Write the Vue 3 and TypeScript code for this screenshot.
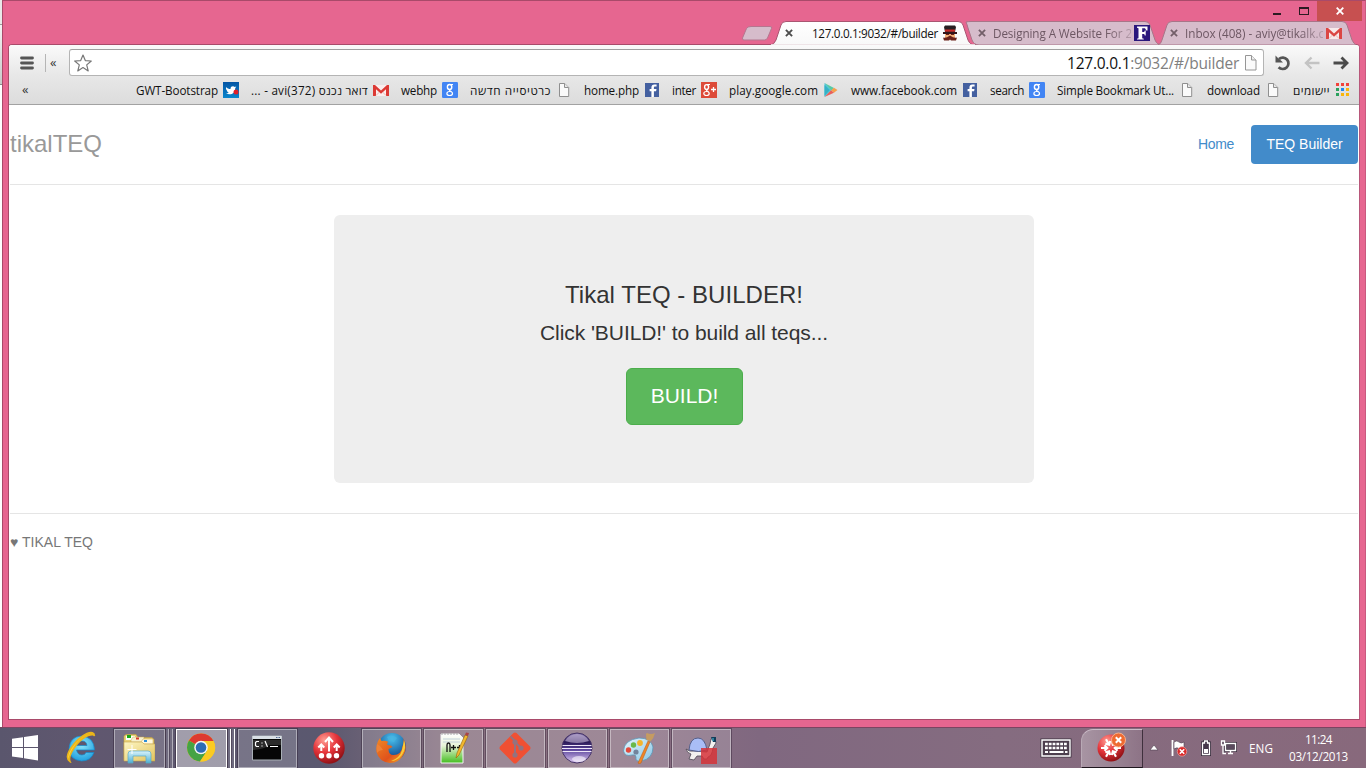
<script setup lang="ts">
interface Bookmark {
  label: string
  icon: string
  width: number
  rtl?: boolean
}

interface TaskItem {
  icon: string
  state: 'open' | 'stack' | 'active' | 'pinned'
}

const bookmarks: Bookmark[] = [
  { label: 'GWT-Bootstrap', icon: 'twitter', width: 82 },
  { label: 'דואר נכנס (372)avi - ...', icon: 'gmail', width: 117, rtl: true },
  { label: 'webhp', icon: 'google', width: 36 },
  { label: 'כרטיסייה חדשה', icon: 'page', width: 81, rtl: true },
  { label: 'home.php', icon: 'facebook', width: 55 },
  { label: 'inter', icon: 'gplus', width: 24 },
  { label: 'play.google.com', icon: 'play', width: 89 },
  { label: 'www.facebook.com', icon: 'facebook', width: 106 },
  { label: 'search', icon: 'google', width: 34 },
  { label: 'Simple Bookmark Ut...', icon: 'page', width: 117 },
  { label: 'download', icon: 'page', width: 53 },
  { label: 'יישומים', icon: 'apps', width: 37, rtl: true },
]

const tasks: TaskItem[] = [
  { icon: 'explorer', state: 'stack' },
  { icon: 'chrome', state: 'active' },
  { icon: 'cmd', state: 'open' },
  { icon: 'arrows', state: 'pinned' },
  { icon: 'firefox', state: 'open' },
  { icon: 'notepad', state: 'open' },
  { icon: 'git', state: 'open' },
  { icon: 'eclipse', state: 'open' },
  { icon: 'paint', state: 'open' },
  { icon: 'turtle', state: 'open' },
]

const inwardAngles = [30, 90, 150, 210, 270, 330]

// Spreads or tightens letters so that a label fills the given width.
const vFit = {
  mounted(el: HTMLElement, binding: { value: number }) {
    const apply = () => {
      el.style.letterSpacing = '0px'
      const natural = el.getBoundingClientRect().width
      const count = (el.textContent ?? '').trim().length
      el.style.letterSpacing = `${(binding.value - natural) / count}px`
    }
    apply()
    document.fonts.ready.then(apply)
  },
}
</script>

<template>
  <svg class="defs" width="0" height="0" aria-hidden="true">
    <defs>
      <linearGradient id="gTab" x1="0" y1="0" x2="0" y2="1"><stop offset="0" stop-color="#fff" /><stop offset="1" stop-color="#f8f8f8" /></linearGradient>
      <linearGradient id="gBird" x1="0" y1="0" x2="0" y2="1"><stop offset="0" stop-color="#0455a4" /><stop offset="1" stop-color="#0a86cc" /></linearGradient>
      <linearGradient id="gFolder" x1="0" y1="0" x2="1" y2="1"><stop offset="0" stop-color="#fdf6c4" /><stop offset="1" stop-color="#e2c35c" /></linearGradient>
      <linearGradient id="gStand" x1="0" y1="0" x2="0" y2="1"><stop offset="0" stop-color="#d9f3fb" /><stop offset="1" stop-color="#4fb0d3" /></linearGradient>
      <radialGradient id="gRed" cx=".35" cy=".25" r=".8"><stop offset="0" stop-color="#ff9d94" /><stop offset=".5" stop-color="#e5343a" /><stop offset="1" stop-color="#8a0d12" /></radialGradient>
      <radialGradient id="gIe" cx=".5" cy=".35" r=".7"><stop offset="0" stop-color="#8be6fb" /><stop offset="1" stop-color="#1a9bdc" /></radialGradient>
      <linearGradient id="gRing" x1="0" y1="1" x2="1" y2="0"><stop offset="0" stop-color="#ffe04d" /><stop offset="1" stop-color="#f3b20f" /></linearGradient>
      <radialGradient id="gGlobe" cx=".5" cy=".2" r=".8"><stop offset="0" stop-color="#49c1ee" /><stop offset="1" stop-color="#08357f" /></radialGradient>
      <linearGradient id="gFox" x1="0" y1="0" x2="1" y2="1"><stop offset="0" stop-color="#f08a24" /><stop offset=".6" stop-color="#e0521c" /><stop offset="1" stop-color="#f6b327" /></linearGradient>
      <linearGradient id="gNote" x1="0" y1="0" x2="0" y2="1"><stop offset="0" stop-color="#fff" /><stop offset=".4" stop-color="#e8f4d8" /><stop offset="1" stop-color="#43bd1f" /></linearGradient>
      <linearGradient id="gEcl" x1="0" y1="0" x2="0" y2="1"><stop offset="0" stop-color="#8a78b0" /><stop offset=".3" stop-color="#2b1a56" /><stop offset=".55" stop-color="#59439a" /><stop offset="1" stop-color="#e2cdf5" /></linearGradient>
      <linearGradient id="gPal" x1="0" y1="0" x2="1" y2="1"><stop offset="0" stop-color="#e3f5fc" /><stop offset="1" stop-color="#8cc7e6" /></linearGradient>
    </defs>

    <symbol id="twitter" viewBox="0 0 16 16">
      <rect width="16" height="16" fill="url(#gBird)" />
      <path d="M3 5c1.200 1.500 2.700 2 4.500 2 0-2 1.200-2.700 2.400-2.700.8 0 1.400.3 1.800.7l1.600-.4-1.100 1.600c0 4-2.500 6-5.600 6-1.500 0-2.700-.4-3.600-1 1.100 0 2-.2 2.700-.8C4.300 10 4 9.300 4 8.800L3 7z" fill="#fff" />
      <circle cx="13" cy="10" r="2.500" fill="#df2027" />
    </symbol>
    <symbol id="gmail" viewBox="0 0 16 16">
      <rect x="0" y="3" width="16" height="11" fill="#fbeeee" />
      <path d="M0 14V3h2L8 8.500 14 3h2v11h-3V7.200L8 11.800 3 7.200V14z" fill="#dc3a35" />
      <path d="M3 13.500l3.500-3.500M13 13.500l-3.500-3.500" stroke="#e9a8a5" stroke-width=".8" />
    </symbol>
    <symbol id="google" viewBox="0 0 16 16">
      <rect width="16" height="16" rx="1.300" fill="#4285f4" />
      <g fill="none" stroke="#fff">
        <ellipse cx="7.600" cy="5" rx="2.200" ry="2.500" stroke-width="1.400" />
        <path d="M7.800 2.500H11M8 7.600c-1.300 1 .4 1.400 1.500 2.100" stroke-width="1.200" />
        <ellipse cx="7.700" cy="11.500" rx="2.800" ry="2" stroke-width="1.200" />
      </g>
    </symbol>
    <symbol id="gplus" viewBox="0 0 16 16">
      <rect width="16" height="16" fill="#dd4b39" />
      <g fill="none" stroke="#fff">
        <ellipse cx="5.600" cy="5" rx="2" ry="2.400" stroke-width="1.400" />
        <path d="M6 2.500h3M6 7.600c-1.300 1 .4 1.400 1.500 2.100" stroke-width="1.200" />
        <ellipse cx="5.500" cy="11.500" rx="2.700" ry="2" stroke-width="1.200" />
        <path d="M12.500 5v5M10 7.500h5" stroke-width="1.300" />
      </g>
    </symbol>
    <symbol id="page" viewBox="0 0 16 16">
      <path d="M3.500 1.500h5.200l4 4v9H3.500z" fill="#fafafa" stroke="#8f8f8f" />
      <path d="M8.500 1.500v4h4" fill="#e8e8e8" stroke="#8f8f8f" />
    </symbol>
    <symbol id="facebook" viewBox="0 0 16 16">
      <rect x="1" y="1" width="14" height="14" fill="#4460a0" />
      <path d="M9.900 15V9.300h2.200l.4-2.200H9.900V5.800c0-.8.400-1.200 1.200-1.200h1.500V2.500h-2.200c-2 0-3 1.200-3 3v1.600H5.600v2.200h1.800V15z" fill="#fff" />
    </symbol>
    <symbol id="play" viewBox="0 0 16 16">
      <path d="M1.500 1l7 7-7 7z" fill="#4cc3d9" />
      <path d="M1.500 1l9.500 5-2.500 2.500z" fill="#57cba4" />
      <path d="M8 8.200l3-2.400L14.500 8 11 10.700z" fill="#f6a04c" />
      <path d="M1.500 15L8 8.200l3 2.500z" fill="#e9605a" />
      <path d="M1.500 3v11l5-6z" fill="#35b2c5" />
    </symbol>
    <symbol id="apps" viewBox="0 0 16 16">
      <path d="M1 1h3v3H1zM6 1h3v3H6zM11 1h3v3h-3z" fill="#f2423a" />
      <path d="M1 6h3v3H1z" fill="#2ba15d" /><path d="M6 6h3v3H6z" fill="#1e88f0" /><path d="M11 6h3v3h-3z" fill="#f9b60c" />
      <path d="M1 11h3v3H1z" fill="#2ba15d" /><path d="M6 11h3v3H6zM11 11h3v3h-3z" fill="#f9b60c" />
    </symbol>

    <symbol id="explorer" viewBox="0 0 32 32">
      <path d="M1 8V4l2-1.500h10l2 3h14l2 2V28H1z" fill="#e9d27a" stroke="#bd9a3a" stroke-width=".6" />
      <path d="M3 4h9v4H3z" fill="#fff" /><path d="M4 3h4v3H4z" fill="#17a817" />
      <path d="M8 8l2-3h11v5H8z" fill="#f7f1cf" stroke="#c8a64a" stroke-width=".5" /><path d="M13 5.500h3v2h-3z" fill="#d4382b" />
      <path d="M18 10l2-3h10v5H18z" fill="#fff8dd" stroke="#c8a64a" stroke-width=".5" /><path d="M21 8h3v2h-3z" fill="#2d8ed9" />
      <path d="M1 10h18l2 2h11v17H1z" fill="url(#gFolder)" stroke="#c8a64a" stroke-width=".6" />
      <path d="M5 31V22q0-3 3-3h17q3 0 3 3v9h-5v-7H10v7z" fill="url(#gStand)" stroke="#5aa9c6" stroke-width=".7" />
      <path d="M9 13v9M4.500 17.500h9" stroke="#fff" stroke-width="1" />
    </symbol>
    <symbol id="chrome" viewBox="0 0 32 32">
      <circle cx="16" cy="15.500" r="14" fill="#fbc81b" />
      <path d="M16 15.500L3.900 8.500A14 14 0 0 1 28.500 9H16z" fill="#dd3a30" />
      <path d="M3.900 8.500A14 14 0 0 0 15 29.500l7-10.500-6-3.500z" fill="#45a344" />
      <path d="M22 19l-7 10.500A14 14 0 0 0 28.500 9H16z" fill="#fbcb22" />
      <circle cx="16" cy="15.500" r="6.800" fill="#f4f4f4" /><circle cx="16" cy="15.500" r="5.300" fill="#2d6cb5" />
    </symbol>
    <symbol id="cmd" viewBox="0 0 32 32">
      <path d="M1.500 4h29v24h-29z" fill="#060606" stroke="#a9b0b6" />
      <path d="M1.500 4h29v3h-29z" fill="#d9dfe5" /><path d="M25 5h1.500v1H25zM27.500 5H29v1h-1.500z" fill="#536b95" />
      <path d="M2 18q12-1 16-5h12V8H2z" fill="#2b2b2b" />
      <path d="M8 9.500H5.500l-1 1v3l1 1H8M11 10.500v1M11 13.500v1M14 9l2.500 6M19 14.500h8" fill="none" stroke="#fff" stroke-width="1.200" />
    </symbol>
    <symbol id="arrows" viewBox="0 0 32 32">
      <circle cx="16" cy="16" r="15.700" fill="url(#gRed)" />
      <g fill="none" stroke="#fff" stroke-width="2">
        <path d="M16 19.500V6M12 10l4-4.500 4 4.500" />
        <path d="M8.300 19v-6M5.300 15.500l3-3 3 3" />
        <path d="M23.700 19v-6M20.700 15.500l3-3 3 3" />
      </g>
      <g fill="#fff"><circle cx="8.500" cy="23.800" r="2.700" /><circle cx="16" cy="23.800" r="2.700" /><circle cx="23.500" cy="23.800" r="2.700" /></g>
    </symbol>
    <symbol id="firefox" viewBox="0 0 32 32">
      <circle cx="17" cy="15" r="14" fill="url(#gGlobe)" />
      <path d="M12 5q5-3 10 1l-3 4-5-1z" fill="#48b4e0" opacity=".7" />
      <path d="M28 6q5 8 1 16-5 9-14 9Q4 30 1.500 20 .5 12 5 6l1.500 3q4-1 7 1-2 1-1 3 4 0 5 2l-4 2q0 6 5 6 8 0 9-9 2-3 .5-8z" fill="url(#gFox)" />
      <path d="M29 8q3 8-2 15-5 6-11 6 9-3 11-11 1-4 2-10z" fill="#f9cd38" />
      <path d="M2 12q3 1 6 6-4 0-6 3-1-5 0-9z" fill="#ee8237" />
    </symbol>
    <symbol id="notepad" viewBox="0 0 32 32">
      <path d="M4 2h18l4 4v25H4z" fill="url(#gNote)" stroke="#f4f4f4" />
      <path d="M5 1v2M8 1v2M11 1v2M14 1v2M17 1v2M20 1v2" stroke="#aaa" />
      <path d="M6 7h17M6 10h17" stroke="#b8c7d5" stroke-width=".8" />
      <path d="M10 20v-7q0-2 1.500-2t1.500 2v7M14 15.500h5M16.500 13v5M20 15.500h5M22.500 13v5" fill="none" stroke="#111" stroke-width="1.300" />
      <path d="M19 26l1-5L28 3l3 1-9 19z" fill="#f2b82e" stroke="#94630b" stroke-width=".6" />
      <path d="M28 3l1-2.500 3 .5-1 3z" fill="#a44" />
    </symbol>
    <symbol id="git" viewBox="0 0 32 32">
      <path d="M14.500 1Q16 0 17.500 1L31 14.500Q32 16 31 17.500L17.500 31Q16 32 14.500 31L1 17.500Q0 16 1 14.500z" fill="#f05033" />
      <path d="M11.500 4.500L16 9v15M16 10l6 6" fill="none" stroke="#94727e" stroke-width="2" />
      <g fill="#94727e"><circle cx="16" cy="10" r="2.600" /><circle cx="16" cy="23" r="2.600" /><circle cx="22" cy="16" r="2.600" /></g>
    </symbol>
    <symbol id="eclipse" viewBox="0 0 32 32">
      <circle cx="16" cy="16" r="15" fill="url(#gEcl)" stroke="#453367" />
      <path d="M4 9Q8 2 16 2t12 7q-12 4-24 0z" fill="#c9bddc" opacity=".6" />
      <path d="M1.500 13.500h29M1 16.500h30M1.500 19.500h29" stroke="#eee7f8" stroke-width="1.100" />
      <ellipse cx="18" cy="27" rx="7" ry="3" fill="#fff" opacity=".55" />
    </symbol>
    <symbol id="paint" viewBox="0 0 32 32">
      <path d="M16 6q12 0 14 9 0 12-12 14-6 1-5-4 0-3-4-2Q2 25 .5 19 1 8 16 6z" fill="url(#gPal)" stroke="#5b97b7" stroke-width=".8" />
      <circle cx="5.500" cy="18" r="2.700" fill="#e34a3c" /><circle cx="10.500" cy="13" r="2.700" fill="#69b948" /><circle cx="17" cy="11" r="2.900" fill="#f4b52e" />
      <circle cx="13" cy="20" r="2.600" fill="#72849c" />
      <path d="M15 31l10-22 2 1-9 21q-2 1.500-3 0z" fill="#ef8527" stroke="#b75a12" stroke-width=".5" />
      <path d="M23.500 8q-.5-4-.5-6l1-1q4 2 8 0-1 5-4.500 8.500z" fill="#c59b62" />
    </symbol>
    <symbol id="turtle" viewBox="0 0 32 32">
      <path d="M1 17q4 3 7 2l14 1 3-8 1-5h4l1 4-3 5q-1 8-5 9l-1 2h-3l-2-3h-5l-3 4-5-1 2-5q-4-1-5-5z" fill="#f3f1ef" stroke="#4c4854" stroke-width=".8" />
      <path d="M4 18Q5 6 13 6q7 0 9 12-8 3-18 0z" fill="#a9bdf6" stroke="#55608b" />
      <path d="M26 5h5v5h-3z" fill="#123c58" /><path d="M28 6v3" stroke="#44c6e4" />
      <path d="M16 16h16v16H16z" fill="#d53338" opacity=".85" />
    </symbol>
  </svg>

  <div class="desktop">
    <div class="upper">
      <div class="sliver"></div>
      <div class="window">
        <div class="titlebar">
          <svg class="min" width="8" height="15"><path d="M0 12h8v2H0z" fill="#2c1b22" /></svg>
          <svg class="max" width="10" height="15"><path d="M0 6h10v8H0zM1 8v5h8V8z" fill="#2c1b22" fill-rule="evenodd" /></svg>
          <div class="close"><svg width="8" height="8"><path d="M.7.7l6.600 6.600M7.300.7L.7 7.300" stroke="#fff" stroke-width="1.800" /></svg></div>
        </div>
        <div class="tabs">
          <svg class="newtab" width="32" height="24"><path d="M10 5.500h19q2.500 0 1.500 2l-4 9.500q-1 2-3 2H3q-2 0-1.500-2l4-9.500q1-2 4.500-2z" fill="#d6bccb" stroke="#b5768f" /></svg>
          <div class="tab active">
            <svg class="shape" width="206" height="24"><path d="M0 24q4 0 6-5L11 4q1-3.500 5-3.500h172q4 0 5 3.500l5 15q2 5 7 5z" fill="url(#gTab)" stroke="#a95571" /><path d="M1 24h204" stroke="#f8f8f8" stroke-width="1.500" /></svg>
            <svg class="x" width="8" height="8"><path d="M.9.900l6.200 6.200M7.100.900L.9 7.100" stroke="#4c4c4c" stroke-width="1.900" /></svg>
            <span class="tab-title t1"><span v-fit="126">127.0.0.1:9032/#/builder</span></span>
            <svg class="fav" width="16" height="16"><path d="M2 2l1-1.500h10L14 2l-1 5H3z" fill="#272022" /><path d="M3 4.500h10v2.200H3z" fill="#c92a28" /><path d="M1 7h14v2H1z" fill="#30151a" /><path d="M3 9h10v5H3z" fill="#f4b179" /><path d="M4 9.500h3M9 9.500h3" stroke="#6a2119" /><path d="M1 12.500q3 1 7-2 4 3 7 2l-1 3H9l-1-1-1 1H2z" fill="#6a2119" /></svg>
          </div>
          <div class="tab second">
            <svg class="shape" width="198" height="24"><path d="M1 1q2-.5 5-.5h174q4 0 5 3.500l5 15q2 5 7 5H14q-5 0-7-5L3 7Q2 3 1 1z" fill="#d6bccb" stroke="#a87588" /></svg>
            <svg class="x" width="8" height="8"><path d="M.9.900l6.200 6.200M7.100.900L.9 7.100" stroke="#735e69" stroke-width="1.800" /></svg>
            <span class="tab-title t2 fade"><span v-fit="139">Designing A Website For 2</span></span>
            <svg class="fav" width="16" height="16"><rect width="16" height="16" fill="#2a177c" /><path d="M3 1.500h10.500v4h-1.200L11 3.300H8.200V7h2l.6-1.500h.9v5h-.9L10.200 9h-2v4.200l1.600.5v.9H3v-.9l1.500-.5V3.200L3 2.700z" fill="#fff" /></svg>
          </div>
          <div class="tab third">
            <svg class="shape" width="204" height="24"><path d="M3 24q3-1 4-5l5-15Q13 .5 17 .5h170q4 0 5 3.500l5 15q2 4 4 5z" fill="#d6bccb" stroke="#a87588" /></svg>
            <svg class="x" width="8" height="8"><path d="M.9.900l6.200 6.200M7.100.900L.9 7.100" stroke="#735e69" stroke-width="1.800" /></svg>
            <span class="tab-title t3 fade"><span v-fit="139">Inbox (408) - aviy@tikalk.c</span></span>
            <svg class="fav" width="16" height="16" opacity=".9"><use href="#gmail" /></svg>
          </div>
        </div>
        <div class="client">
          <div class="chrome-bars">
            <div class="toolbar">
              <svg class="menu" width="14" height="14"><path d="M1.500 2h11M1.500 7h11M1.500 12h11" stroke="#555" stroke-width="2.800" stroke-linecap="round" /></svg>
              <div class="sep"></div>
              <span class="chev">«</span>
              <div class="omnibox">
                <svg class="star" width="18" height="18" viewBox="0 0 18 18"><path d="M9 1l2.300 5.600 6 .4-4.600 3.900 1.500 6L9 13.600 3.800 16.900l1.500-6L.7 7l6-.4z" fill="#fff" stroke="#777" stroke-width="1.200" stroke-linejoin="round" /></svg>
                <span class="url"><span v-fit="172">127.0.0.1<span class="path">:9032/#/builder</span></span></span>
                <svg class="doc" width="12" height="16" viewBox="0 0 12 16"><path d="M.5.5h6l4.500 4.500v10H.5z" fill="#fafafa" stroke="#969696" /><path d="M6.500.5V5H11" fill="#eee" stroke="#969696" /></svg>
              </div>
              <svg class="nav reload" width="16" height="16" viewBox="0 0 16 16"><path d="M4 4A5.700 5.700 0 1 1 3.600 12.200" fill="none" stroke="#555" stroke-width="2.700" /><path d="M.5.500v7H8L5.700 5.200 3 3z" fill="#555" /></svg>
              <svg class="nav" width="16" height="14" viewBox="0 0 16 14"><path d="M15.500 7H3M7.500 1.500L2 7l5.500 5.500" fill="none" stroke="#c3c3c3" stroke-width="2.400" /></svg>
              <svg class="nav" width="16" height="14" viewBox="0 0 16 14"><path d="M.5 7H13M8.500 1.500L14 7l-5.500 5.500" fill="none" stroke="#4b4b4b" stroke-width="2.800" /></svg>
            </div>
            <div class="bookmarks">
              <span class="chev">«</span>
              <div v-for="(b, i) in bookmarks" :key="i" class="bookmark">
                <span class="bm-label" :style="{ width: b.width + 'px' }"><span v-fit="b.width" :dir="b.rtl ? 'rtl' : 'ltr'">{{ b.label }}</span></span>
                <svg width="16" height="16"><use :href="'#' + b.icon" /></svg>
              </div>
            </div>
          </div>
          <div class="page">
            <header class="head">
              <h3>tikalTEQ</h3>
              <nav>
                <a class="home"><span v-fit="36">Home</span></a>
                <a class="pill">TEQ Builder</a>
              </nav>
            </header>
            <main class="jumbotron">
              <h1><span v-fit="238">Tikal TEQ - BUILDER!</span></h1>
              <p><span v-fit="288">Click 'BUILD!' to build all teqs...</span></p>
              <button>BUILD!</button>
            </main>
            <footer><span v-fit="83">♥ TIKAL TEQ</span></footer>
          </div>
        </div>
      </div>
    </div>

    <div class="taskbar">
      <div class="start"><svg width="26" height="26" viewBox="0 0 26 26" fill="#fff"><path d="M0 3.700L11 2.200V12H0zM12 2l14-2v12H12zM0 13h11v10L0 21.500zM12 13h14v12.500L12 23.300z" /></svg></div>
      <div class="ie">
        <svg width="32" height="32" viewBox="0 0 32 32">
          <path d="M29 21.500Q26 30 16.500 30 4.500 29 4 17.500 5 5.500 16.500 5 29 6 29.500 19H11.500q1 5 5.500 5 3 0 4-2.500zM11.500 14.500H22q-.5-4.500-5-4.500-4.500 0-5.500 4.500z" fill="url(#gIe)" stroke="#1688c8" stroke-width=".7" />
          <path d="M5 30.500Q-.5 27 6 17T22 2.500q7-2.500 7.500 2.500-.5-2.500-6.500-.5-8 3.500-14 12.500T5 30.500z" fill="url(#gRing)" stroke="#eab51a" stroke-width="1.600" />
        </svg>
      </div>
      <div v-for="t in tasks" :key="t.icon" class="task" :class="t.state">
        <div class="cell"><svg width="32" height="32"><use :href="'#' + t.icon" /></svg></div>
        <template v-if="t.state === 'stack' || t.state === 'active'">
          <div class="edge"></div>
          <div class="edge"></div>
        </template>
      </div>
      <div class="spacer"></div>
      <svg class="kbd" width="32" height="20" viewBox="0 0 32 20">
        <path d="M1.500 1.500h29v17h-29z" fill="#4c3e4d" stroke="#3f3340" stroke-width="2" /><path d="M2 2h28v16H2z" fill="#4c3e4d" stroke="#fff" stroke-width="1.400" />
        <path d="M5 6h22M5 10h22" stroke="#fff" stroke-width="2.500" stroke-dasharray="2.800 1" /><path d="M5 14h3M9.500 14h14M25 14h2.500" stroke="#fff" stroke-width="2" />
      </svg>
      <div class="tray-app">
        <svg width="32" height="32" viewBox="0 0 32 32">
          <circle cx="15" cy="17" r="13.500" fill="url(#gRed)" />
          <g transform="translate(15 17)" fill="none" stroke="#fff" stroke-width="2.100">
            <path v-for="a in inwardAngles" :key="a" d="M0-10V-4.500M-2.800-6.500L0-3.700l2.800-2.800" :transform="`rotate(${a})`" />
          </g>
          <circle cx="22.500" cy="9" r="7" fill="#ee6a31" stroke="#f7b08d" /><path d="M19.800 6.300l5.400 5.400M25.200 6.300l-5.400 5.400" stroke="#fff" stroke-width="2" />
        </svg>
      </div>
      <svg class="caret" width="10" height="8"><path d="M5 1L9 6H1z" fill="#fff" stroke="#4c3e4d" stroke-width=".6" /></svg>
      <svg class="flag" width="18" height="18" viewBox="0 0 18 18"><path d="M2.500 1v16" stroke="#fff" stroke-width="1.800" /><path d="M4 3q3-2 5 0t5 0v7q-3 1-5-.5T4 10z" fill="#fff" stroke="#4c3e4d" stroke-width=".6" /><circle cx="12" cy="12.500" r="4.700" fill="#d92a2a" stroke="#f0a0a0" stroke-width=".7" /><path d="M9.800 10.300l4.400 4.400M14.200 10.300l-4.400 4.400" stroke="#fff" stroke-width="1.600" /></svg>
      <svg class="battery" width="10" height="16" viewBox="0 0 10 16"><path d="M3 .5h4v2h2v13H1v-13h2z" fill="#44364a" stroke="#332838" stroke-width="2" /><path d="M3.500 1h3v2h2v11.500h-7V3h2z" fill="#44364a" stroke="#fff" stroke-width="1.300" /><path d="M3 9h4v4H3z" fill="#fff" /></svg>
      <svg class="net" width="17" height="16" viewBox="0 0 17 16"><path d="M5.500 3.500h10v7h-10z" fill="#5b4b5e" stroke="#3b2f3e" stroke-width="3" /><path d="M5.500 3.500h10v7h-10zM8 13.500h5M10.500 11v2.500" fill="none" stroke="#fff" stroke-width="1.400" /><path d="M1.500 1h3v4h-3zM3 5v8.500h3" fill="#5b4b5e" stroke="#fff" stroke-width="1.300" /></svg>
      <span class="lang"><span v-fit="24">ENG</span></span>
      <div class="clock"><div><span v-fit="27">11:24</span></div><div><span v-fit="59">03/12/2013</span></div></div>
    </div>
  </div>
</template>

<style>
html,
body {
  margin: 0;
  overflow: hidden;
}
</style>

<style scoped>
* {
  box-sizing: border-box;
}
svg {
  display: block;
  flex: none;
}
.defs {
  position: absolute;
}
.desktop {
  width: 1366px;
  height: 768px;
  display: flex;
  flex-direction: column;
  overflow: hidden;
  font: 11.7px/16px "Open Sans", "Noto Sans", "Liberation Sans", sans-serif;
  white-space: nowrap;
}
.upper {
  height: 727px;
  display: flex;
}
.sliver {
  width: 2px;
  background: linear-gradient(#e9e9e9 0 24px, #999 24px 25px, #f4f4f4 25px, #c9c9c9 84px, #888 84px 85px, #fff 85px);
}
.window {
  width: 1364px;
  display: flex;
  flex-direction: column;
  background: #e66690;
  border: 1px solid #a94a6a;
  border-right-color: #c95a7f;
  border-bottom: 0;
}
.titlebar {
  height: 20px;
  display: flex;
  justify-content: flex-end;
  padding-right: 3px;
}
.min {
  margin-right: 18px;
}
.max {
  margin-right: 8px;
}
.close {
  width: 45px;
  height: 20px;
  background: #c75050;
  display: flex;
  align-items: center;
  justify-content: center;
}
.tabs {
  height: 24px;
  display: flex;
  padding-left: 738px;
}
.tab {
  position: relative;
  height: 24px;
  display: flex;
  align-items: center;
  flex: none;
}
.shape {
  position: absolute;
  left: 0;
  top: 0;
}
.tab > span,
.fav,
.x {
  position: relative;
}
.tab.active {
  width: 206px;
  margin-left: -3px;
  z-index: 2;
}
.tab.second {
  width: 198px;
  margin-left: -11px;
}
.tab.third {
  width: 204px;
  margin-left: -8px;
}
.active .x {
  margin-left: 15px;
}
.second .x {
  margin-left: 13px;
}
.third .x {
  margin-left: 15px;
}
.tab-title {
  height: 16px;
  overflow: hidden;
}
.t1 {
  width: 127px;
  margin: 0 3px 0 19px;
  color: #111;
}
.t2 {
  width: 138px;
  margin: 0 3px 0 7px;
}
.t3 {
  width: 138px;
  margin: 0 3px 0 7px;
}
.fade {
  color: #6d5763;
  -webkit-mask-image: linear-gradient(90deg, #000 82%, rgba(0, 0, 0, 0.3));
  mask-image: linear-gradient(90deg, #000 82%, rgba(0, 0, 0, 0.3));
}
.client {
  width: 1352px;
  height: 676px;
  margin-left: 5px;
  margin-top: -1px;
  border: 1px solid #a94a6a;
  border-right-color: #b8577a;
  border-radius: 4px 4px 0 0;
  background: #fff;
  overflow: hidden;
}
.chrome-bars {
  height: 60px;
  background: linear-gradient(#fafafa, #e8e8e8 50%, #dcdcdc);
  border-bottom: 1px solid #a2a2a2;
}
.toolbar {
  height: 32px;
  display: flex;
  align-items: center;
  padding: 4px 0 1px 11px;
}
.menu {
  margin-right: 11px;
}
.sep {
  width: 1px;
  height: 18px;
  background: #b5b5b5;
  margin-right: 4px;
}
.chev {
  font: 13px/14px "Open Sans", sans-serif;
  color: #333;
  padding-bottom: 2px;
}
.toolbar .chev {
  width: 19px;
}
.omnibox {
  width: 1195px;
  height: 27px;
  display: flex;
  align-items: center;
  background: #fff;
  border: 1px solid #b4b4b4;
  border-top-color: #a0a0a0;
  border-radius: 3px;
  padding: 0 6px 0 4px;
}
.url {
  margin-left: auto;
  margin-right: 6px;
  font-size: 15.5px;
  line-height: 22px;
  color: #111;
}
.path {
  color: #808080;
}
.nav {
  margin-left: 13px;
}
.reload {
  margin-left: 11px;
}
.bookmarks {
  height: 27px;
  display: flex;
  align-items: center;
  gap: 12px;
  padding-left: 13px;
  padding-bottom: 1px;
}
.bookmarks .chev {
  width: 102px;
}
.bookmark {
  display: flex;
  align-items: center;
  gap: 5px;
}
.bm-label {
  display: flex;
  color: #111;
  height: 16px;
}
.bm-label span {
  flex: none;
}
.page {
  width: 1350px;
  height: 614px;
  padding: 20px 1px 0;
  font-family: "Liberation Sans", Arial, sans-serif;
  color: #333;
}
.head {
  height: 60px;
  display: flex;
  justify-content: space-between;
  border-bottom: 1px solid #e5e5e5;
}
h3 {
  margin: 0;
  font: 24px/38px "Liberation Sans", Arial, sans-serif;
  color: #999;
}
nav {
  display: flex;
  font-size: 14px;
  line-height: 39px;
  color: #428bca;
}
.home {
  margin-right: 17px;
}
.pill {
  width: 107px;
  height: 39px;
  border-radius: 4px;
  background: #428bca;
  color: #fff;
  text-align: center;
}
.jumbotron {
  width: 700px;
  height: 268px;
  margin: 30px auto;
  background: #eee;
  border-radius: 6px;
  display: flex;
  flex-direction: column;
  align-items: center;
}
h1 {
  margin: 66px 0 0;
  font-size: 24px;
  line-height: 28px;
  font-weight: 400;
}
p {
  margin: 9px 0 20px;
  font-size: 21px;
  line-height: 30px;
}
button {
  width: 117px;
  height: 57px;
  padding: 0 0 2px 1px;
  border: 1px solid #4cae4c;
  border-radius: 6px;
  background: #5cb85c;
  color: #fff;
  font: 21px/30px "Liberation Sans", Arial, sans-serif;
}
footer {
  border-top: 1px solid #e5e5e5;
  padding-top: 18px;
  font-size: 14px;
  line-height: 20px;
  color: #777;
}
.taskbar {
  height: 41px;
  display: flex;
  align-items: center;
  background: linear-gradient(90deg, #5a566d 0, #60576f 90px, #5a586f 320px, #87707f 450px, #8b7082 620px, #806880 760px, #856c80 1000px, #88697c 1366px);
  border-top: 1px solid #7c4461;
  color: #fff;
}
.start {
  width: 50px;
  display: flex;
  padding-left: 12px;
}
.ie {
  width: 64px;
  display: flex;
  padding-left: 15px;
  padding-bottom: 3px;
}
.task {
  width: 59px;
  height: 39px;
  margin-right: 3px;
  display: flex;
  flex: none;
}
.cell {
  flex: 1;
  display: flex;
  align-items: center;
  justify-content: center;
  padding: 0 2px 1px 0;
  border: 1px solid rgba(255, 255, 255, 0.4);
  background: rgba(255, 255, 255, 0.17);
  box-shadow: 0 0 0 1px rgba(40, 25, 45, 0.4);
}
.pinned .cell {
  border-color: transparent;
  background: none;
  box-shadow: none;
}
.active .cell {
  border-color: #fff;
  background: rgba(255, 255, 255, 0.42);
}
.edge {
  width: 4px;
  border-right: 1px solid rgba(255, 255, 255, 0.45);
  background: rgba(255, 255, 255, 0.12);
  box-shadow: inset 1px 0 rgba(40, 25, 45, 0.4);
}
.active .edge {
  border-right-color: #fff;
}
.spacer {
  flex: 1;
}
.kbd {
  margin-right: 9px;
}
.tray-app {
  width: 62px;
  height: 39px;
  display: flex;
  align-items: center;
  justify-content: center;
  padding-bottom: 2px;
  border-top: 1px solid #cbbdc8;
  border-left: 1px solid #b9a9b5;
  border-right: 1px solid #3f303d;
  border-bottom: 1px solid #1f171e;
  border-radius: 12px 0 0 0;
  background: linear-gradient(90deg, rgba(255, 255, 255, 0.28), rgba(255, 255, 255, 0.06));
}
.caret {
  margin-left: 6px;
}
.flag {
  margin-left: 11px;
}
.battery {
  margin-left: 13px;
}
.net {
  margin-left: 9px;
}
.lang {
  width: 40px;
  margin-left: 12px;
}
.clock {
  width: 59px;
  margin-right: 18px;
  text-align: center;
  line-height: 17px;
}
.lang,
.kbd,
.tray-app {
  flex: none;
}
</style>
